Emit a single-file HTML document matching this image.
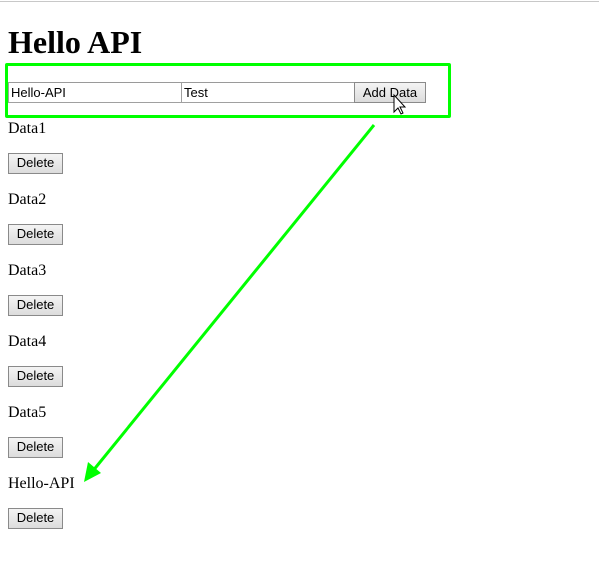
<!DOCTYPE html>
<html><head><style>
body{margin:0;width:599px;height:577px;background:#fff;position:relative;overflow:hidden;font-family:"Liberation Serif",serif;}
.a{position:absolute}
.t{font-size:16px;color:#000;line-height:18px}
.btn{position:absolute;box-sizing:border-box;border:1px solid #8a8a8a;background:linear-gradient(#f4f4f4,#dcdcdc);font:13px "Liberation Sans",sans-serif;text-align:center;line-height:18px;color:#000}
.inp{position:absolute;box-sizing:border-box;border:1px solid #a0a0a0;border-top-color:#9a9a9a;background:#fff;font:13px "Liberation Sans",sans-serif;line-height:19px;padding-left:2px;height:21px;top:82px;width:174px}
</style></head><body>
<div class="a" style="left:0;top:1px;width:599px;height:1px;background:#c8c8c8"></div>
<div class="a" style="left:8px;top:24px;font-size:32px;font-weight:bold;line-height:36px">Hello API</div>
<div class="a" style="left:5px;top:63px;width:440px;height:49px;border:3px solid #00ff00;border-radius:2px"></div>
<div class="inp" style="left:8px">Hello-API</div>
<div class="inp" style="left:181px">Test</div>
<div class="btn" style="left:354px;top:82px;width:72px;height:21px;line-height:19px">Add Data</div>
<div class="a t" style="left:8px;top:120px">Data1</div>
<div class="btn" style="left:8px;top:153px;width:55px;height:21px">Delete</div>
<div class="a t" style="left:8px;top:191px">Data2</div>
<div class="btn" style="left:8px;top:224px;width:55px;height:21px">Delete</div>
<div class="a t" style="left:8px;top:262px">Data3</div>
<div class="btn" style="left:8px;top:295px;width:55px;height:21px">Delete</div>
<div class="a t" style="left:8px;top:333px">Data4</div>
<div class="btn" style="left:8px;top:366px;width:55px;height:21px">Delete</div>
<div class="a t" style="left:8px;top:404px">Data5</div>
<div class="btn" style="left:8px;top:437px;width:55px;height:21px">Delete</div>
<div class="a t" style="left:8px;top:475px">Hello-API</div>
<div class="btn" style="left:8px;top:508px;width:55px;height:21px">Delete</div>
<svg class="a" style="left:0;top:0" width="599" height="577">
<line x1="374" y1="125" x2="92" y2="472" stroke="#00ff00" stroke-width="3"/>
<polygon points="84,482 88,462 101,473" fill="#00ff00"/>
<path d="M394 95 L394 112 L398 108 L401 114 L403 113 L400 107 L405 107 Z" fill="#fff" stroke="#000" stroke-width="1"/>
</svg>
</body></html>
